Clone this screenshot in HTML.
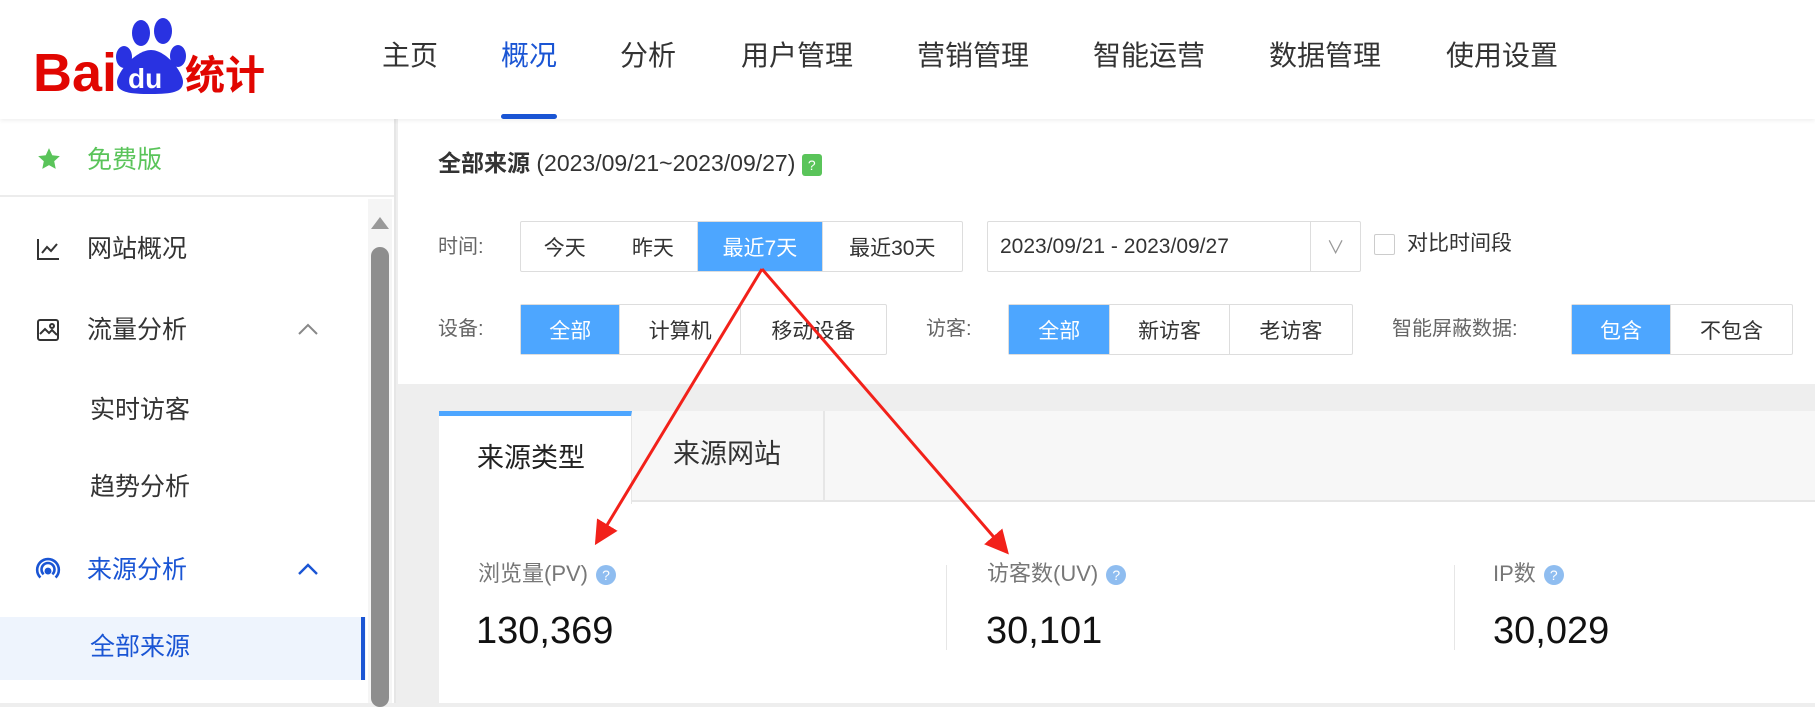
<!DOCTYPE html>
<html><head><meta charset="utf-8"><style>
*{margin:0;padding:0;box-sizing:border-box}
body{width:1815px;height:703px;overflow:hidden;background:#eeeeee;font-family:"Liberation Sans","Noto Sans CJK SC",sans-serif;position:relative;color:#333}
.a{position:absolute;white-space:nowrap}
.hdr{left:0;top:0;width:1815px;height:119px;background:#fff;box-shadow:0 2px 4px rgba(0,0,0,.06);z-index:2}
.nav{top:36px;font-size:28px;color:#333;line-height:40px}
.side{left:0;top:119px;width:396px;height:584px;background:#fff;border-right:2px solid #e6e6e6}
.mi{font-size:25px;line-height:34px;color:#333}
.top{left:398px;top:119px;width:1417px;height:265px;background:#fff}
.lbl{font-size:20px;color:#666;line-height:28px}
.grp{display:flex;border:1px solid #ddd;border-radius:2px;height:51px}
.grp div{display:flex;align-items:center;justify-content:center;font-size:21px;color:#333;border-left:1px solid #ddd}
.grp div:first-child{border-left:none}
.grp .on{background:#4da6ff;color:#fff}
.q{display:inline-block;width:20px;height:20px;border-radius:50%;background:#8fbdf0;color:#fff;font-size:14px;text-align:center;line-height:20px;vertical-align:middle;margin-left:8px}
</style></head><body>
<div class="a hdr">
 <svg class="a" style="left:0;top:0" width="280" height="110">
  <text x="33" y="91" font-family="Liberation Sans" font-weight="bold" font-size="54" fill="#e10601">Bai</text>
  <ellipse cx="141" cy="33" rx="9" ry="13" fill="#2932e1"/><ellipse cx="163" cy="31" rx="9" ry="13" fill="#2932e1"/>
  <ellipse cx="124" cy="57" rx="8" ry="11" fill="#2932e1"/><ellipse cx="178" cy="56" rx="8" ry="11" fill="#2932e1"/>
  <path d="M151 50 C136 50 117 72 117 82 C117 92 128 94 151 94 C172 94 183 92 183 82 C183 72 166 50 151 50Z" fill="#2932e1"/>
  <text x="128" y="88" font-family="Liberation Sans" font-weight="bold" font-size="28" fill="#fff">du</text>
  <text x="185" y="89" font-family="Noto Sans CJK SC" font-weight="bold" font-size="40" fill="#e10601">统计</text>
 </svg>
 <div class="a nav" style="left:382px">主页</div>
 <div class="a nav" style="left:501px;color:#1a55d4">概况</div>
 <div class="a" style="left:501px;top:114px;width:56px;height:5px;border-radius:3px;background:#1a55d4"></div>
 <div class="a nav" style="left:620px">分析</div>
 <div class="a nav" style="left:741px">用户管理</div>
 <div class="a nav" style="left:917px">营销管理</div>
 <div class="a nav" style="left:1093px">智能运营</div>
 <div class="a nav" style="left:1269px">数据管理</div>
 <div class="a nav" style="left:1446px">使用设置</div>
</div>
<div class="a side">
 <div class="a" style="left:0;top:0;width:394px;height:78px;border-bottom:2px solid #ececec"></div>
 <svg class="a" style="left:36px;top:27px" width="26" height="26" viewBox="0 0 24 24"><path d="M12 2l3 6.5 7 .8-5.2 4.8 1.4 7L12 17.6 5.8 21.1l1.4-7L2 9.3l7-.8z" fill="#5ac45a"/></svg>
 <div class="a mi" style="left:87px;top:24px;color:#5ac45a">免费版</div>
 <div class="a" style="left:368px;top:80px;width:24px;height:504px;background:#f5f5f5"></div>
 <div class="a" style="left:371px;top:98px;width:0;height:0;border-left:9px solid transparent;border-right:9px solid transparent;border-bottom:12px solid #999"></div>
 <div class="a" style="left:371px;top:128px;width:18px;height:460px;border-radius:9px;background:#8e8e8e"></div>
 <svg class="a" style="left:36px;top:118px" width="24" height="24" viewBox="0 0 24 24" fill="none" stroke="#333" stroke-width="2"><path d="M2 2v20h21M6 16l5-6 4 4 6-7"/></svg>
 <div class="a mi" style="left:87px;top:113px">网站概况</div>
 <svg class="a" style="left:36px;top:199px" width="24" height="24" viewBox="0 0 24 24" fill="none" stroke="#333" stroke-width="2"><rect x="2" y="2" width="20" height="20" rx="2"/><path d="M4 16l5-5 4 4 3-3 5 5"/><circle cx="16" cy="8" r="2"/></svg>
 <div class="a mi" style="left:87px;top:194px">流量分析</div>
 <svg class="a" style="left:297px;top:203px" width="22" height="14" viewBox="0 0 22 14" fill="none" stroke="#888" stroke-width="2"><path d="M2 12l9-9 9 9"/></svg>
 <div class="a mi" style="left:90px;top:274px">实时访客</div>
 <div class="a mi" style="left:90px;top:351px">趋势分析</div>
 <svg class="a" style="left:35px;top:438px" width="26" height="26" viewBox="0 0 24 24" fill="none" stroke="#1a55d4" stroke-width="2.4"><path d="M5 19a10 10 0 1 1 14 0M8 16a6 6 0 1 1 8 0"/><circle cx="12" cy="13" r="2" fill="#1a55d4"/></svg>
 <div class="a mi" style="left:87px;top:434px;color:#1a55d4">来源分析</div>
 <svg class="a" style="left:297px;top:443px" width="22" height="14" viewBox="0 0 22 14" fill="none" stroke="#1a55d4" stroke-width="2.4"><path d="M2 12l9-9 9 9"/></svg>
 <div class="a" style="left:0;top:498px;width:366px;height:63px;background:#eef4fd"></div>
 <div class="a" style="left:361px;top:498px;width:4px;height:63px;background:#1a55d4"></div>
 <div class="a mi" style="left:90px;top:511px;color:#1a55d4">全部来源</div>
</div>
<div class="a top">
 <div class="a" style="left:40px;top:28px;font-size:23px;line-height:32px;color:#333"><b>全部来源</b> (2023/09/21~2023/09/27) <span style="display:inline-block;width:20px;height:22px;background:#5ac45a;border-radius:3px;color:#fff;font-size:14px;text-align:center;line-height:22px;vertical-align:middle">?</span></div>
 <div class="a lbl" style="left:40px;top:114px">时间:</div>
 <div class="a grp" style="left:122px;top:102px;width:443px"><div style="width:88px">今天</div><div style="width:89px;border-left:none">昨天</div><div class="on" style="width:125px">最近7天</div><div style="width:141px">最近30天</div></div>
 <div class="a grp" style="left:589px;top:102px;width:374px"><div style="width:324px;justify-content:flex-start;padding-left:12px">2023/09/21 - 2023/09/27</div><div style="width:50px;color:#999;font-size:18px">∨</div></div>
 <div class="a" style="left:976px;top:115px;width:21px;height:21px;border:1px solid #ccc;border-radius:2px"></div>
 <div class="a" style="left:1009px;top:111px;font-size:21px;line-height:28px">对比时间段</div>
 <div class="a lbl" style="left:40px;top:196px">设备:</div>
 <div class="a grp" style="left:122px;top:185px;width:367px"><div class="on" style="width:99px">全部</div><div style="width:121px">计算机</div><div style="width:147px">移动设备</div></div>
 <div class="a lbl" style="left:528px;top:196px">访客:</div>
 <div class="a grp" style="left:610px;top:185px;width:345px"><div class="on" style="width:101px">全部</div><div style="width:120px">新访客</div><div style="width:124px">老访客</div></div>
 <div class="a lbl" style="left:994px;top:196px">智能屏蔽数据:</div>
 <div class="a grp" style="left:1173px;top:185px;width:222px"><div class="on" style="width:99px">包含</div><div style="width:123px">不包含</div></div>
</div>
<div class="a" style="left:439px;top:411px;width:1376px;height:292px;background:#fff">
 <div class="a" style="left:0;top:0;width:1376px;height:91px;background:#f7f7f7;border-bottom:2px solid #e6e6e6"></div>
 <div class="a" style="left:0;top:0;width:193px;height:93px;background:#fff;border-top:5px solid #4da6ff;border-right:1px solid #e6e6e6"></div>
 <div class="a" style="left:193px;top:0;width:193px;height:91px;border-right:2px solid #e6e6e6"></div>
 <div class="a" style="left:38px;top:27px;font-size:27px;line-height:40px;color:#222">来源类型</div>
 <div class="a" style="left:234px;top:23px;font-size:27px;line-height:40px;color:#333">来源网站</div>
 <div class="a" style="left:39px;top:148px;font-size:22px;color:#777;line-height:30px">浏览量(PV)<span class="q">?</span></div>
 <div class="a" style="left:37px;top:198px;font-size:38px;color:#111;line-height:44px">130,369</div>
 <div class="a" style="left:507px;top:154px;width:1px;height:85px;background:#e6e6e6"></div>
 <div class="a" style="left:548px;top:148px;font-size:22px;color:#777;line-height:30px">访客数(UV)<span class="q">?</span></div>
 <div class="a" style="left:547px;top:198px;font-size:38px;color:#111;line-height:44px">30,101</div>
 <div class="a" style="left:1015px;top:154px;width:1px;height:85px;background:#e6e6e6"></div>
 <div class="a" style="left:1054px;top:148px;font-size:22px;color:#777;line-height:30px">IP数<span class="q">?</span></div>
 <div class="a" style="left:1054px;top:198px;font-size:38px;color:#111;line-height:44px">30,029</div>
</div>
<svg class="a" style="left:0;top:0;z-index:5" width="1815" height="703">
 <defs><marker id="m" markerWidth="8" markerHeight="8" refX="6" refY="4" orient="auto" markerUnits="strokeWidth"><path d="M0 0L8 4L0 8z" fill="#f2211a"/></marker></defs>
 <line x1="762" y1="269" x2="598" y2="540" stroke="#f2211a" stroke-width="3" marker-end="url(#m)"/>
 <line x1="762" y1="269" x2="1005" y2="550" stroke="#f2211a" stroke-width="3" marker-end="url(#m)"/>
</svg>
</body></html>
